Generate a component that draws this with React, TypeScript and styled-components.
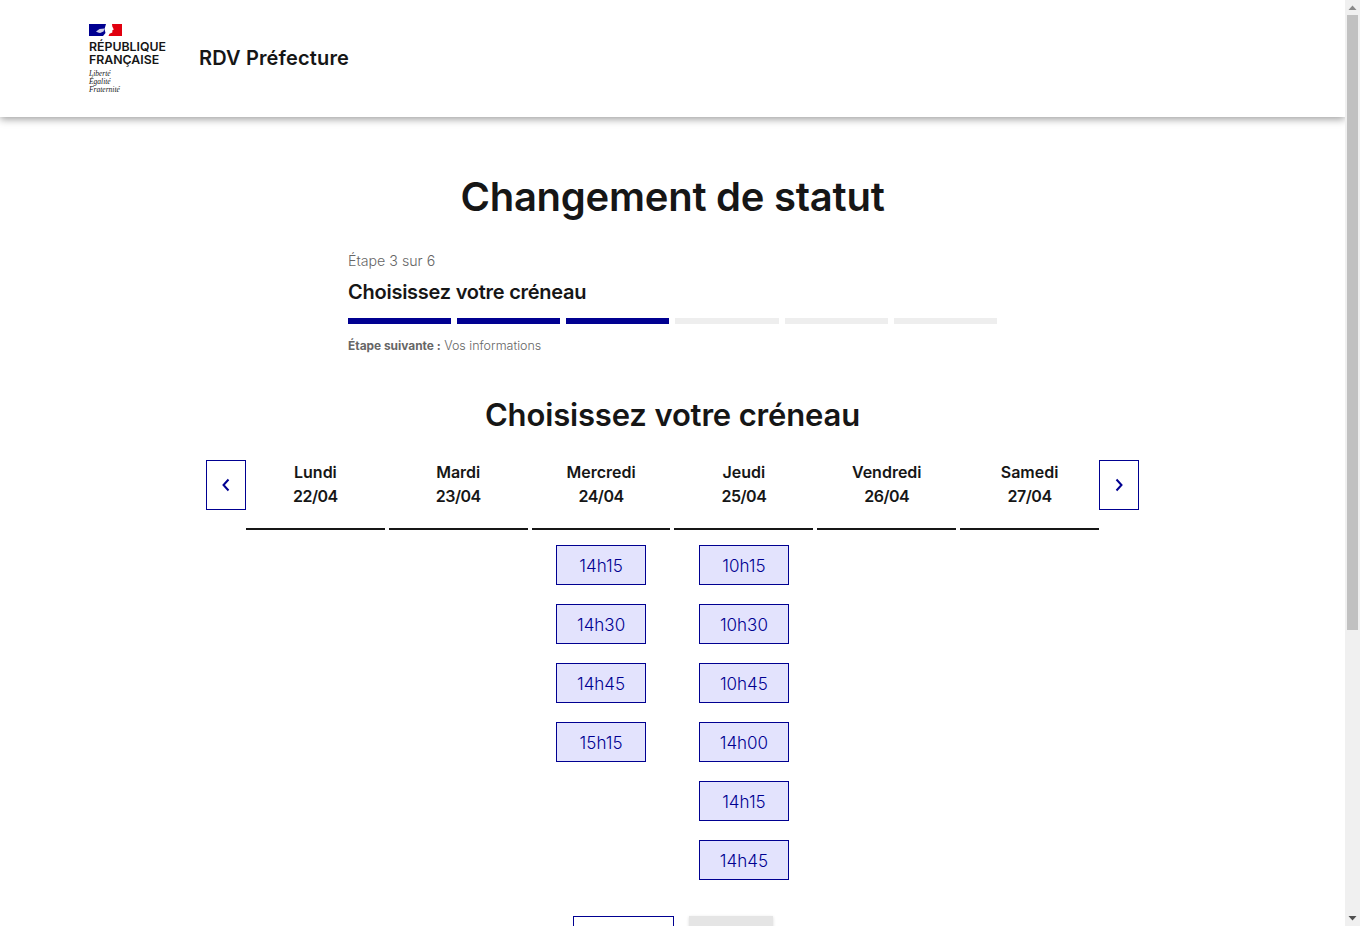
import React from "react";
import styled, { createGlobalStyle } from "styled-components";

const Global = createGlobalStyle`
  body { margin: 0 15px 0 0; background: #fff; color: #161616; font-family: "Inter", "Noto Sans", sans-serif; }
  * { box-sizing: border-box; }
`;

const ScrollBar = styled.div`
  position: fixed;
  top: 0;
  right: 0;
  bottom: 0;
  width: 15px;
  display: flex;
  flex-direction: column;
  background: #f0f0f0;
  z-index: 10;
`;
const ScrollArrow = styled.div`
  height: 15px;
  flex: none;
  display: flex;
  align-items: center;
  justify-content: center;
`;
const ScrollThumb = styled.div`
  height: 615px;
  flex: none;
  margin: 0 2px;
  background: #c1c1c1;
`;
const ScrollRest = styled.div`
  flex: 1;
`;

const Header = styled.header`
  height: 117px;
  padding: 24px 89px 0;
  display: flex;
  align-items: flex-start;
  gap: 32px;
  background: #fff;
  box-shadow: 0 2px 8px rgba(0, 0, 0, 0.4);
  position: relative;
`;
const Logo = styled.div`
  display: flex;
  flex-direction: column;
  width: 78px;
`;
const Flag = styled.svg`
  display: block;
`;
const Republic = styled.div`
  margin-top: 4px;
  font-size: 12.3px;
  line-height: 13px;
  font-weight: 600;
  color: #161616;
  white-space: nowrap;
`;
const Motto = styled.div`
  margin-top: 4px;
  font-family: "Liberation Serif", serif;
  font-style: italic;
  font-size: 7.5px;
  line-height: 8px;
  color: #161616;
`;
const ServiceName = styled.div`
  margin-top: 20px;
  font-size: 20px;
  line-height: 28px;
  font-weight: 600;
  letter-spacing: 0.15px;
`;
const Main = styled.main`
  display: flex;
  flex-direction: column;
  align-items: center;
  padding: 52px 0 393px;
`;
const Title = styled.h1`
  margin: 0;
  font-size: 40px;
  line-height: 56px;
  font-weight: 600;
  letter-spacing: -0.25px;
`;
const Stepper = styled.section`
  width: 649px;
  margin-top: 24px;
`;
const StepCount = styled.div`
  font-size: 14.2px;
  line-height: 24px;
  font-weight: 300;
  color: #666;
`;
const StepTitle = styled.h2`
  margin: 5px 0 0;
  font-size: 20px;
  line-height: 28px;
  font-weight: 600;
  letter-spacing: -0.25px;
`;
const Bars = styled.div`
  display: grid;
  grid-template-columns: repeat(6, 1fr);
  gap: 6px;
  margin-top: 12px;
`;
const Bar = styled.div<{ $on: boolean }>`
  height: 6px;
  background: ${(p) => (p.$on ? "#000091" : "#eeeeee")};
`;
const NextStep = styled.p`
  margin: 12px 0 0;
  font-size: 12.5px;
  line-height: 20px;
  font-weight: 300;
  color: #666;
  b { font-size: 11.9px; font-weight: 700; }
`;
const SectionTitle = styled.h2`
  margin: 37px 0 0;
  font-size: 31px;
  line-height: 44px;
  font-weight: 600;
  letter-spacing: -0.15px;
`;
const Calendar = styled.div`
  display: flex;
  align-items: flex-start;
  margin-top: 23px;
`;
const NavButton = styled.button`
  width: 40px;
  height: 50px;
  padding: 0;
  display: flex;
  align-items: center;
  justify-content: center;
  background: #fff;
  border: 1px solid #000091;
  color: #000091;
  flex: none;
`;
const Days = styled.div`
  width: 853px;
  display: grid;
  grid-template-columns: repeat(6, 1fr);
  gap: 4px;
`;
const Day = styled.div`
  display: flex;
  flex-direction: column;
  align-items: center;
`;
const DayHead = styled.div`
  width: 100%;
  height: 70px;
  border-bottom: 2px solid #161616;
  text-align: center;
  font-size: 16px;
  line-height: 24px;
  font-weight: 600;
`;
const DayDate = styled.div`
  letter-spacing: -0.5px;
`;
const Slots = styled.div`
  display: flex;
  flex-direction: column;
  gap: 19px;
  margin-top: 15px;
`;
const Slot = styled.button`
  width: 90px;
  height: 40px;
  padding: 2px 0 0;
  background: #e3e3fd;
  border: 1px solid #000091;
  color: #000091;
  font-family: inherit;
  font-size: 17px;
  font-weight: 300;
`;
const Actions = styled.div`
  display: flex;
  gap: 15px;
  margin: 36px 0 0 1px;
`;
const Back = styled.button`
  width: 101px;
  height: 40px;
  background: #fff;
  border: 1px solid #000091;
  color: #000091;
  font-family: inherit;
  font-size: 16px;
`;
const Next = styled.button`
  width: 84px;
  height: 40px;
  background: #e5e5e5;
  border: 0;
  color: #929292;
  font-family: inherit;
  font-size: 16px;
  box-shadow: 0 1px 3px rgba(0, 0, 0, 0.15);
`;

const Chevron = ({ dir }: { dir: "left" | "right" }) => (
  <svg width="16" height="16" viewBox="0 0 16 16" fill="none" stroke="currentColor" strokeWidth="2">
    <path d={dir === "left" ? "M10.5 2.5 L5.5 8 L10.5 13.5" : "M5.5 2.5 L10.5 8 L5.5 13.5"} />
  </svg>
);

const days = [
  { name: "Lundi", date: "22/04", slots: [] as string[] },
  { name: "Mardi", date: "23/04", slots: [] as string[] },
  { name: "Mercredi", date: "24/04", slots: ["14h15", "14h30", "14h45", "15h15"] },
  { name: "Jeudi", date: "25/04", slots: ["10h15", "10h30", "10h45", "14h00", "14h15", "14h45"] },
  { name: "Vendredi", date: "26/04", slots: [] as string[] },
  { name: "Samedi", date: "27/04", slots: [] as string[] },
];

export default function App() {
  return (
    <>
      <Global />
      <ScrollBar aria-hidden="true">
        <ScrollArrow>
          <svg width="9" height="5" viewBox="0 0 9 5">
            <path d="M0.5 5 L8.5 5 L4.5 0.5 Z" fill="#8a8a8a" />
          </svg>
        </ScrollArrow>
        <ScrollThumb />
        <ScrollRest />
        <ScrollArrow>
          <svg width="9" height="5" viewBox="0 0 9 5">
            <path d="M0.5 0 L8.5 0 L4.5 4.5 Z" fill="#505050" />
          </svg>
        </ScrollArrow>
      </ScrollBar>
      <Header>
        <Logo>
          <Flag width="33" height="12" viewBox="0 0 33 12">
            <rect width="33" height="12" fill="#e1000f" />
            <rect width="17" height="12" fill="#000091" />
            <path d="M17 0 L23 0 L23.3 2.5 L24.8 5.5 L23.4 6.3 L23.3 8.5 L20.5 9.8 L19.5 12 L14 12 L16.5 9 L15.5 5 Z" fill="#fff" />
            <path d="M7 7.5 L10.5 5 L15.5 4.5 L14.5 7.5 L11 9 L9 8.5 Z" fill="#fff" opacity="0.8" />
          </Flag>
          <Republic>
            RÉPUBLIQUE
            <br />
            FRANÇAISE
          </Republic>
          <Motto>
            Liberté
            <br />
            Égalité
            <br />
            Fraternité
          </Motto>
        </Logo>
        <ServiceName>RDV Préfecture</ServiceName>
      </Header>
      <Main>
        <Title>Changement de statut</Title>
        <Stepper>
          <StepCount>Étape 3 sur 6</StepCount>
          <StepTitle>Choisissez votre créneau</StepTitle>
          <Bars>
            {[0, 1, 2, 3, 4, 5].map((i) => (
              <Bar key={i} $on={i < 3} />
            ))}
          </Bars>
          <NextStep>
            <b>Étape suivante :</b> Vos informations
          </NextStep>
        </Stepper>
        <SectionTitle>Choisissez votre créneau</SectionTitle>
        <Calendar>
          <NavButton aria-label="Précédent">
            <Chevron dir="left" />
          </NavButton>
          <Days>
            {days.map((d) => (
              <Day key={d.date}>
                <DayHead>
                  {d.name}
                  <DayDate>{d.date}</DayDate>
                </DayHead>
                <Slots>
                  {d.slots.map((s) => (
                    <Slot key={s}>{s}</Slot>
                  ))}
                </Slots>
              </Day>
            ))}
          </Days>
          <NavButton aria-label="Suivant">
            <Chevron dir="right" />
          </NavButton>
        </Calendar>
        <Actions>
          <Back>Précédent</Back>
          <Next disabled>Suivant</Next>
        </Actions>
      </Main>
    </>
  );
}
